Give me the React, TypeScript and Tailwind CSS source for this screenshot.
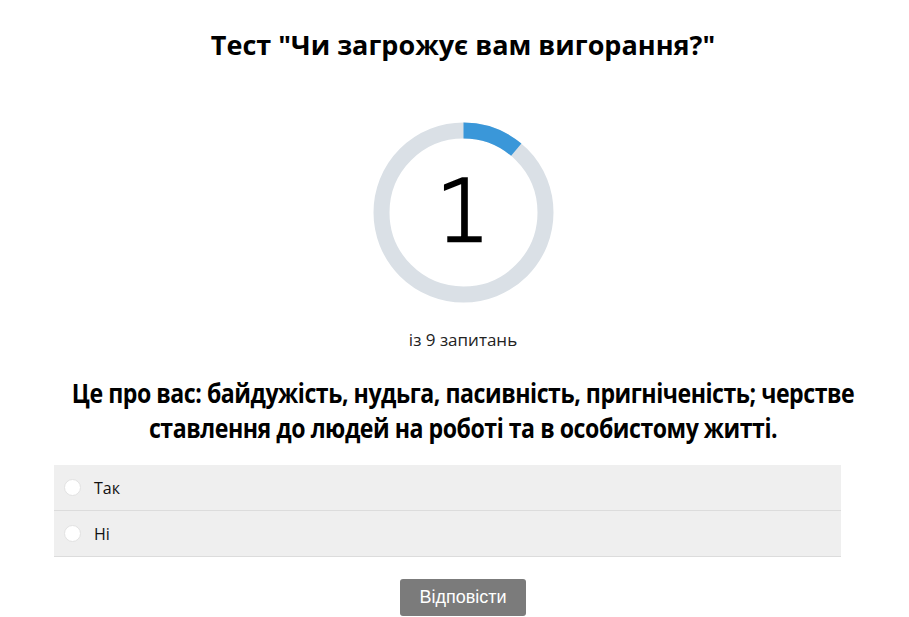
import { useState } from 'react'

const answers = ['Так', 'Ні']

const Progress = ({ current, total }: { current: number; total: number }) => {
  const r = 82
  const c = 2 * Math.PI * r
  const part = (current / total) * c
  return (
    <div className="relative h-[181px] w-[181px]">
      <svg width="181" height="181" viewBox="0 0 181 181" className="block">
        <circle cx="90.5" cy="90.5" r={r} fill="none" stroke="#dae0e6" strokeWidth="16" />
        <circle
          cx="90.5"
          cy="90.5"
          r={r}
          fill="none"
          stroke="#3a97d9"
          strokeWidth="16"
          strokeDasharray={`${part} ${c}`}
          transform="rotate(-90 90.5 90.5)"
        />
      </svg>
      <div className="absolute inset-0 flex items-center justify-center pb-[4px] font-['DejaVu_Sans',sans-serif] text-[86px] font-light leading-none text-black [-webkit-text-stroke:2.5px_black]">
        {current}
      </div>
    </div>
  )
}

export default function App() {
  const [picked, setPicked] = useState<number | null>(null)

  return (
    <div className="min-h-[617px] bg-white font-['Open_Sans',sans-serif] text-black">
      <div className="flex w-[872px] flex-col items-center pl-[54px]">
        <h1 className="mt-[26px] text-[27px] font-bold leading-[38px]">Тест "Чи загрожує вам вигорання?"</h1>

        <div className="mt-[58px]">
          <Progress current={1} total={9} />
        </div>

        <div className="mt-[26px] text-[17px] leading-[22px] text-[#222]">із 9 запитань</div>

        <div className="mt-[24px] shrink-0 whitespace-nowrap text-center text-[27px] font-bold leading-[35px] tracking-[-0.02em] [transform:scaleX(0.856)]">
          Це про вас: байдужість, нудьга, пасивність, пригніченість; черстве
          <br />
          ставлення до людей на роботі та в особистому житті.
        </div>

        <div className="mt-[20px] w-[787px] self-start">
          {answers.map((a, i) => (
            <label
              key={a}
              className="flex h-[46px] cursor-pointer items-center border-b border-[#dcdcdc] bg-[#efefef] pl-[10px]"
            >
              <span className="flex h-[17px] w-[17px] items-center justify-center rounded-full border border-[#e2e2e2] bg-white">
                {picked === i && <span className="h-[7px] w-[7px] rounded-full bg-[#3a97d9]" />}
              </span>
              <input type="radio" name="q" className="hidden" onChange={() => setPicked(i)} />
              <span className="ml-[13px] text-[16px] text-[#111]">{a}</span>
            </label>
          ))}
        </div>

        <button className="mt-[22px] h-[37px] w-[126px] rounded-[3px] bg-[#7b7b7b] font-['Liberation_Sans',Arial,sans-serif] text-[18px] text-white">
          Відповісти
        </button>
      </div>
    </div>
  )
}
